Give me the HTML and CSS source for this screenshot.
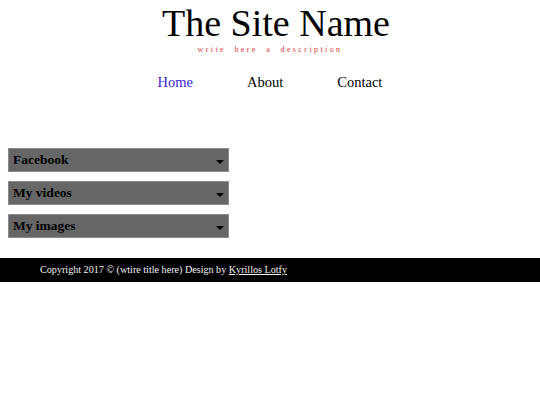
FILE: index.html
```html
<!DOCTYPE html>
<html>
<head>
<meta charset="utf-8">
<title>The Site Name</title>
<link rel="stylesheet" href="styles.css">
</head>
<body>
<header class="site-header">
  <h1 class="site-title">The Site Name</h1>
  <p class="site-desc">write here a description</p>
</header>
<nav class="main-nav">
  <a class="nav-link active" href="#">Home</a>
  <a class="nav-link" href="#">About</a>
  <a class="nav-link" href="#">Contact</a>
</nav>
<main class="content">
  <div class="menu-box"><span class="menu-label">Facebook</span><span class="caret"></span></div>
  <div class="menu-box"><span class="menu-label">My videos</span><span class="caret"></span></div>
  <div class="menu-box"><span class="menu-label">My images</span><span class="caret"></span></div>
</main>
<footer class="site-footer">
  Copyright 2017 © (wtire title here) Design by <a class="footer-link" href="#">Kyrillos Lotfy</a>
</footer>
</body>
</html>
```
FILE: styles.css
```css
html, body {
  margin: 0;
  padding: 0;
  background: #fff;
  font-family: "Liberation Serif", "Times New Roman", serif;
}
.site-header {
  text-align: center;
  padding-top: 3px;
}
.site-title {
  margin: 0;
  padding-left: 12px;
  font-size: 38px;
  font-weight: normal;
  line-height: 40px;
  color: #000;
}
.site-desc {
  margin: 2px 0 0;
  font-size: 8px;
  line-height: 10px;
  letter-spacing: 2.4px;
  word-spacing: 4px;
  color: #e0393e;
}
.main-nav {
  display: flex;
  justify-content: center;
  gap: 54px;
  margin-top: 17px;
}
.nav-link {
  font-size: 14.5px;
  line-height: 20px;
  color: #000;
  text-decoration: none;
}
.nav-link.active {
  color: #3a1fd6;
}
.content {
  display: flex;
  flex-direction: column;
  gap: 9px;
  padding: 56px 0 0 8px;
}
.menu-box {
  display: flex;
  align-items: center;
  justify-content: space-between;
  box-sizing: border-box;
  width: 221px;
  height: 24px;
  padding: 0 4px 0 4px;
  background: #666;
  border: 1px solid #8a8a8a;
}
.menu-label {
  font-size: 13.5px;
  font-weight: bold;
  color: #000;
}
.caret {
  width: 0;
  height: 0;
  margin-top: 4px;
  border-left: 4px solid transparent;
  border-right: 4px solid transparent;
  border-top: 4px solid #000;
}
.site-footer {
  margin-top: 20px;
  height: 24px;
  line-height: 24px;
  padding-left: 40px;
  background: #000;
  color: #f2f2f2;
  font-size: 10.15px;
}
.footer-link {
  color: #f2f2f2;
  text-decoration: underline;
}
```
